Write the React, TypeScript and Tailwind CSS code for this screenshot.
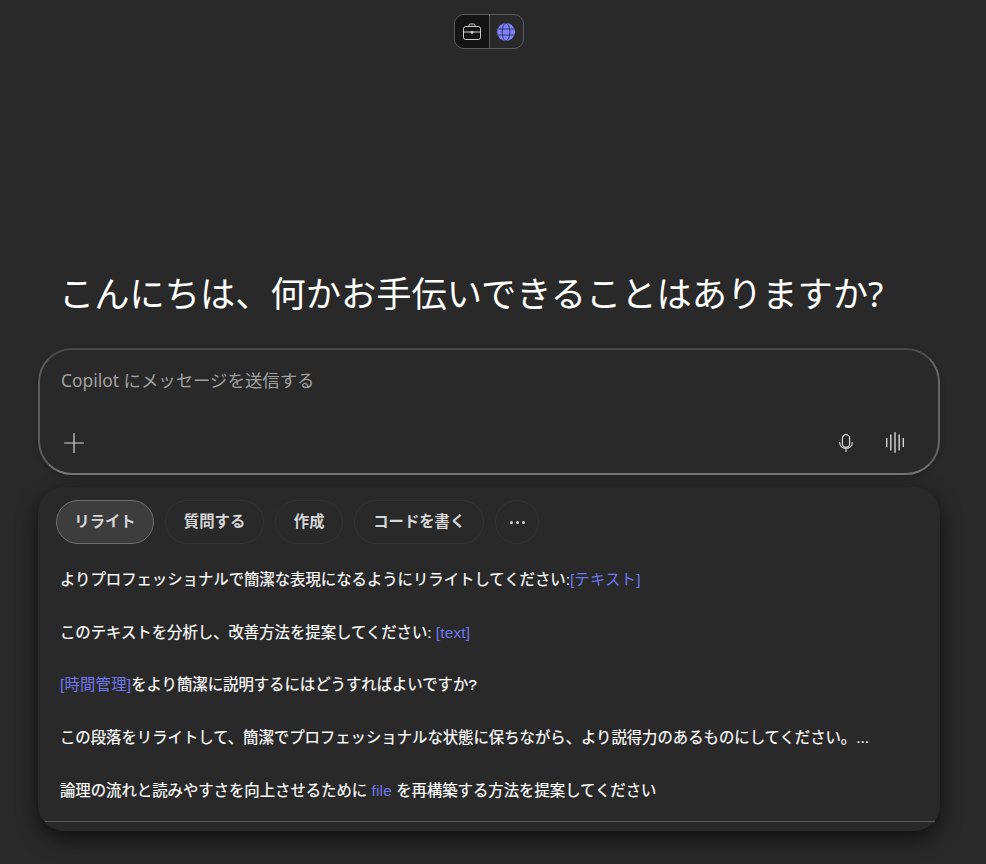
import * as React from 'react';

const font = "font-['Noto_Sans','Noto_Sans_CJK_JP',sans-serif]";

const Tag = ({ children }: { children: React.ReactNode }) => <span className="tracking-[0.2px] text-[#6f77ee] [-webkit-text-stroke:0px]">{children}</span>;

const tabs = ['質問する', '作成', 'コードを書く'];

const prompts: React.ReactNode[] = [
    <>よりプロフェッショナルで簡潔な表現になるようにリライトしてください:<Tag>[テキスト]</Tag></>,
    <>このテキストを分析し、改善方法を提案してください: <Tag>[text]</Tag></>,
    <><Tag>[時間管理]</Tag>をより簡潔に説明するにはどうすればよいですか?</>,
    <>この段落をリライトして、簡潔でプロフェッショナルな状態に保ちながら、より説得力のあるものにしてください。...</>,
    <>論理の流れと読みやすさを向上させるために <Tag>file</Tag> を再構築する方法を提案してください</>,
];

function Briefcase() {
    return (
        <svg width="18" height="17" viewBox="0 0 18 17" fill="none" stroke="#cfcfcf" strokeWidth="1">
            <path d="M6 3.5V2.2C6 1.5 6.5 1 7.2 1h3.6c.7 0 1.2.5 1.2 1.2v1.3" />
            <rect x="0.5" y="3.5" width="17" height="13" rx="2.2" />
            <path d="M0.5 9h17" />
            <path d="M8 8.5h2v1.6H8z" fill="#cfcfcf" />
        </svg>
    );
}

function Globe() {
    return (
        <svg width="18" height="18" viewBox="0 0 18 18" fill="none">
            <circle cx="9" cy="9" r="9" fill="#7a82ff" />
            <g stroke="#2f3050" strokeWidth="0.9">
                <ellipse cx="9" cy="9" rx="3.8" ry="9" />
                <path d="M0.8 6h16.4M0.8 12h16.4" />
            </g>
        </svg>
    );
}

function Mic() {
    return (
        <svg width="14" height="18" viewBox="0 0 14 18" fill="none" stroke="#d6d6d6" strokeWidth="1.2" strokeLinecap="round">
            <rect x="3.4" y="0.7" width="7.2" height="12.6" rx="3.6" />
            <path d="M0.7 8.5c0 3.6 2.8 6 6.3 6s6.3-2.4 6.3-6M7 14.5v3" />
        </svg>
    );
}

function Voice() {
    return (
        <svg width="18" height="21" viewBox="0 0 18 21" fill="none" stroke="#d6d6d6" strokeWidth="1.4" strokeLinecap="round">
            <path d="M0.7 6.5v8M4.8 3v15M9 0.7v19.6M13.2 3v15M17.3 6.5v8" />
        </svg>
    );
}

function PlusIcon() {
    return (
        <svg width="20" height="20" viewBox="0 0 20 20" fill="none" stroke="#d6d6d6" strokeWidth="1.2" strokeLinecap="round">
            <path d="M10 0.6v18.8M0.6 10h18.8" />
        </svg>
    );
}

export default function App() {
    return (
        <div className={`flex min-h-[864px] flex-col items-center bg-[#292929] pr-[8px] ${font}`}>
            <div className="mt-[14px] flex h-[35px] w-[70px] overflow-hidden rounded-[10px] border border-[#5c5c5c]">
                <div className="flex flex-1 items-center justify-center border-r border-[#5c5c5c] bg-[#141414]"><Briefcase /></div>
                <div className="flex flex-1 items-center justify-center"><Globe /></div>
            </div>

            <div className="mt-[219px] w-[902px]">
                <h1 className="ml-[21px] text-[35.25px] leading-[50px] font-normal text-white">こんにちは、何かお手伝いできることはありますか?</h1>

                <div className="mt-[30px] flex h-[127px] flex-col justify-between rounded-[34px] border-2 border-b-[#757575] border-l-[#5c5c5c] border-r-[#666666] border-t-[#4a4a4a] bg-[#292929] pb-[20px] pl-[24px] pr-[34px] pt-[18px] shadow-[0_2px_6px_rgba(0,0,0,0.2)]">
                    <p className="-ml-[3px] text-[17.4px] leading-6 text-[#a0a0a0]">Copilot にメッセージを送信する</p>
                    <div className="flex items-center justify-between">
                        <PlusIcon />
                        <div className="flex items-center gap-[33px]"><Mic /><Voice /></div>
                    </div>
                </div>

                <div className="mt-[12px] h-[344px] rounded-[26px] bg-[#292929] pl-[18px] pt-[13px] shadow-[0_8px_20px_rgba(0,0,0,0.6)]">
                    <div className="flex items-center gap-[11px] text-[15.36px] font-bold text-[#d6d6d6]">
                        <button className="h-[44px] w-[98px] rounded-full border border-[#6e6e6e] bg-[#3d3d3d]">リライト</button>
                        {tabs.map((t) => (
                            <button key={t} className="h-[44px] rounded-full border border-[#333333] px-[17.8px]">{t}</button>
                        ))}
                        <button className="flex h-[44px] w-[44px] items-center justify-center gap-[3px] rounded-full border border-[#333333]">
                            <span className="size-[3px] rounded-full bg-[#d6d6d6]" />
                            <span className="size-[3px] rounded-full bg-[#d6d6d6]" />
                            <span className="size-[3px] rounded-full bg-[#d6d6d6]" />
                        </button>
                    </div>
                    <ul className="ml-[4px] mt-[9px] flex flex-col font-['Liberation_Sans','Noto_Sans_CJK_JP',sans-serif] text-[15.36px] font-normal text-white [-webkit-text-stroke:0.2px_white]">
                        {prompts.map((p, i) => (
                            <li key={i} className="flex h-[52.75px] items-center">
                                <span>{p}</span>
                            </li>
                        ))}
                    </ul>
                    <div className="-ml-[11px] mr-[5px] mt-[4px] h-px bg-[#5c5c5c]" />
                </div>
            </div>
        </div>
    );
}
